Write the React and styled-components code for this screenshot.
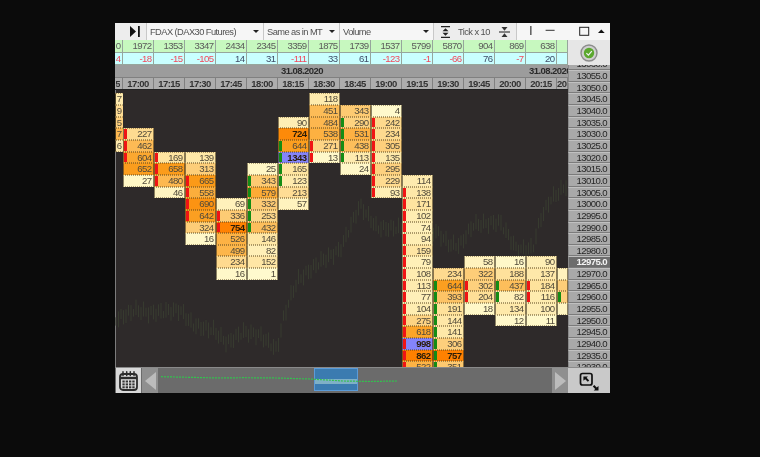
import React from 'react';
import styled, { createGlobalStyle } from 'styled-components';

const GlobalStyle = createGlobalStyle`
  html, body { margin: 0; padding: 0; background: #0b0b0b; }
  body { font-family: "Liberation Sans", Arial, sans-serif; }
`;

const COLS = '8px repeat(14, 31px) 11px';
const ROW_H = 11.67;

const volumes = ['0', 1972, 1353, 3347, 2434, 2345, 3359, 1875, 1739, 1537, 5799, 5870, 904, 869, 638, ''];
const deltas = ['4', -18, -15, -105, 14, 31, -111, 33, 61, -123, -1, -66, 76, -7, 20, ''];
const times = ['16:45', '17:00', '17:15', '17:30', '17:45', '18:00', '18:15', '18:30', '18:45', '19:00', '19:15', '19:30', '19:45', '20:00', '20:15', '20:30'];

// value, marker (r / g), colour override for the cut columns
const columns = [
  { col: 1, top: 13045, rows: [['7', '', 120], ['9', '', 220], ['5', '', 300], ['7', '', 480], ['6', '', 120]] },
  { col: 2, top: 13030, rows: [[227, 'r'], [462, 'r'], [604, 'r'], [652], [27]] },
  { col: 3, top: 13020, rows: [[169, 'r'], [658, 'r'], [480, 'r'], [46]] },
  { col: 4, top: 13020, rows: [[139], [313], [665, 'r'], [558, 'r'], [690, 'r'], [642, 'r'], [324], [16]] },
  { col: 5, top: 13000, rows: [[69], [336, 'r'], [754, 'r'], [526], [499], [234], [16]] },
  { col: 6, top: 13015, rows: [[25], [343, 'g'], [579, 'g'], [332, 'g'], [253, 'g'], [432, 'g'], [146], [82], [152], [1]] },
  { col: 7, top: 13035, rows: [[90], [724], [644, 'g'], [1343, 'g'], [165, 'g'], [123, 'g'], [213], [57]] },
  { col: 8, top: 13045, rows: [[118], [451], [484], [538], [271, 'r'], [13, 'r']] },
  { col: 9, top: 13040, rows: [[343], [290, 'g'], [531, 'g'], [438, 'g'], [113, 'g'], [24]] },
  { col: 10, top: 13040, rows: [[4], [242, 'r'], [234, 'r'], [305, 'r'], [135, 'r'], [295, 'r'], [229, 'r'], [93, 'r']] },
  { col: 11, top: 13010, rows: [[114], [138, 'r'], [171, 'r'], [102, 'r'], [74, 'r'], [94, 'r'], [159, 'r'], [79, 'r'], [108, 'r'], [113, 'r'], [77, 'r'], [104, 'r'], [275, 'r'], [618, 'r'], [998, 'r'], [862, 'r'], [522, 'r']] },
  { col: 12, top: 12970, rows: [[234], [644, 'g'], [393, 'g'], [191, 'g'], [144, 'g'], [141, 'g'], [306, 'g'], [757, 'g'], [351, 'g']] },
  { col: 13, top: 12975, rows: [[58], [322], [302, 'r'], [204, 'r'], [18]] },
  { col: 14, top: 12975, rows: [[16], [188], [437, 'g'], [82, 'g'], [134], [12]] },
  { col: 15, top: 12975, rows: [[90], [137], [184, 'r'], [116, 'r'], [100], [11]] },
  { col: 16, top: 12970, rows: [['', '', 60], ['', '', 320], ['', 'g', 300], ['', '', 40]] },
];

const prices = [];
for (let p = 13060; p >= 12930; p -= 5) prices.push(p);

const ramp = [
  [0, [255, 250, 205]],
  [170, [254, 228, 160]],
  [313, [253, 206, 122]],
  [480, [253, 184, 80]],
  [604, [252, 168, 48]],
  [665, [251, 154, 24]],
  [760, [255, 128, 0]],
];

function heat(value) {
  if (value >= 900) return '#8484fa';
  for (let i = 1; i < ramp.length; i++) {
    if (value <= ramp[i][0]) {
      const [a, ca] = ramp[i - 1];
      const [b, cb] = ramp[i];
      const t = (value - a) / (b - a);
      const c = ca.map((v, n) => Math.round(v + (cb[n] - v) * t));
      return `rgb(${c.join(',')})`;
    }
  }
  return '#ff8000';
}

const Page = styled.div`
  width: 760px; height: 457px; box-sizing: border-box; padding: 23px 0 0 115px; overflow: hidden;
  filter: blur(0.35px);
`;

const Window = styled.div`
  width: 495px; height: 370px; display: flex; flex-direction: column; background: #2e2a2a;
`;

const Toolbar = styled.div`
  height: 17px; display: flex; background: #ededed; color: #505050; font-size: 9.3px; flex: none;
`;

const ToolSegment = styled.div`
  width: ${p => p.$w}px; box-sizing: border-box; display: flex; align-items: center; flex: none;
  padding: 0 ${p => p.$pad || 3}px; gap: ${p => p.$gap || 0}px; justify-content: ${p => p.$justify || 'flex-start'};
  border-left: ${p => (p.$first ? 'none' : '1px solid #c8c8c8')};
  background: ${p => (p.$light ? '#f6f6f6' : 'transparent')};
`;

const ToolLabel = styled.span`
  letter-spacing: -0.56px; white-space: nowrap; margin-right: auto;
`;

const ToolIcon = styled.svg`
  flex: none;
`;

const Caret = styled.span`
  width: 0; height: 0; border-left: 3px solid transparent; border-right: 3px solid transparent;
  border-top: 3px solid #222; margin-right: 1px; flex: none;
`;

const Body = styled.div`
  flex: 1; min-height: 0; display: flex;
`;

const LeftPane = styled.div`
  width: 453px; display: flex; flex-direction: column; flex: none;
`;

const RightPane = styled.div`
  width: 42px; display: flex; flex-direction: column; min-height: 0;
`;

const StatRow = styled.div`
  display: grid; grid-template-columns: ${COLS}; height: 12.5px; flex: none;
  background: ${p => p.$bg};
`;

const StatCell = styled.div`
  box-sizing: border-box; overflow: hidden; text-align: right; padding-right: 1.5px;
  font-size: 9.6px; letter-spacing: -0.6px; line-height: 11.5px;
  border-right: 1px solid #96a69c; border-bottom: 1px solid #96a69c;
  color: ${p => (p.$negative ? '#f2495c' : p.$blue ? '#3f4d68' : '#5a5a5a')};
`;

const DateBar = styled.div`
  display: grid; grid-template-columns: ${COLS}; height: 11.5px; flex: none; background: #9c9c9c; overflow: hidden;
  font-size: 9.5px; letter-spacing: -0.55px; font-weight: bold; color: #2b2b2b; line-height: 11.5px;
`;

const DateLabel = styled.div`
  grid-column: ${p => p.$col}; padding-left: 3px; white-space: nowrap;
`;

const TimeBar = styled.div`
  display: grid; grid-template-columns: ${COLS}; height: 13.5px; flex: none; background: #adadad;
  border-bottom: 1px solid #222; box-sizing: border-box;
`;

const TimeCell = styled.div`
  display: flex; align-items: center; overflow: hidden; white-space: nowrap;
  font-size: 9.5px; letter-spacing: -0.55px; font-weight: bold; color: #333;
  box-sizing: border-box; border-right: 1px solid #808080; border-top: 1px solid #808080;
  padding-right: ${p => (p.$cut ? 2 : 0)}px;
  justify-content: ${p => (p.$left ? 'flex-start' : p.$cut ? 'flex-end' : 'center')};
`;

const CutDigit = styled.span`
  display: inline-block; width: 4px; overflow: hidden; direction: rtl;
`;

const Chart = styled.div`
  position: relative; flex: 1; min-height: 0; overflow: hidden; background: #2e2a2a; box-sizing: border-box; padding-top: 3.3px;
  box-shadow: inset 1px 0 0 #7c7c7c;
`;

const Candles = styled.svg`
  position: absolute; left: 0; top: 0;
`;

const Ladder = styled.div`
  position: relative; display: grid; grid-template-columns: ${COLS}; grid-auto-rows: ${ROW_H}px;
`;

const Cell = styled.div`
  grid-column: ${p => p.$col}; grid-row: ${p => p.$row};
  position: relative; box-sizing: border-box; overflow: hidden;
  background: ${p => p.$bg};
  border-top: 1px dotted rgba(90, 70, 30, 0.5); border-bottom: 1px dotted rgba(90, 70, 30, 0.5);
  border-left: 1px solid rgba(60, 50, 30, ${p => (p.$col === 1 ? 0.9 : 0.6)});
  border-right: 1px solid rgba(60, 50, 30, ${p => (p.$col === 1 ? 0 : 0.6)});
  text-align: right; padding-right: ${p => (p.$col === 1 ? 0.5 : 1.5)}px;
  font-size: 9.6px; letter-spacing: -0.55px; line-height: 10px;
  font-weight: ${p => (p.$strong ? 'bold' : 'normal')};
  color: ${p => (p.$strong ? '#2a1c08' : '#514a3a')};
  &::before {
    content: ''; display: ${p => (p.$mark ? 'block' : 'none')};
    position: absolute; left: 0; top: 0; bottom: 0; width: 3px;
    background: ${p => (p.$mark === 'r' ? '#f01414' : '#148c14')};
  }
`;

const CheckButton = styled.div`
  height: 25px; flex: none; background: #e6e6e6; display: flex; align-items: center; justify-content: center;
  position: relative; z-index: 1;
`;

const PriceColumn = styled.div`
  flex: 1; min-height: 0; overflow: hidden; background: #a6a6a6;
`;

const PriceTrack = styled.div`
  display: grid; grid-auto-rows: ${ROW_H}px; margin-top: -6.7px;
`;

const PriceCell = styled.div`
  box-sizing: border-box; font-size: 9.6px; letter-spacing: -0.6px; font-weight: ${p => (p.$active ? 'bold' : 'normal')};
  line-height: 10px; text-align: right; padding-right: 3px;
  color: ${p => (p.$active ? '#f4f4f4' : '#262626')};
  background: ${p => (p.$active ? '#6d6d6d' : '#a9a9a9')};
  border-top: 1px solid #c0c0c0; border-bottom: 1px solid #7b7b7b; border-left: 1px solid #8a8a8a;
`;

const BottomBar = styled.div`
  height: 26px; flex: none; display: flex; background: #6b6b6b; border-top: 1px solid #8a8a8a; box-sizing: border-box;
`;

const CalendarButton = styled.div`
  width: 25px; background: #d9d9d9; display: flex; align-items: center; justify-content: center; margin-left: 1px; flex: none;
`;

const ArrowButton = styled.div`
  width: 16px; flex: none; background: #8f8f8f; display: flex; align-items: center; justify-content: center;
  margin: ${p => (p.$right ? '0' : '0 0 0 1px')};
  &::after {
    content: ''; width: 0; height: 0;
    border-top: 9px solid transparent; border-bottom: 9px solid transparent;
    ${p => (p.$right ? 'border-left: 11px solid #bcbcbc;' : 'border-right: 11px solid #bcbcbc;')}
  }
`;

const Minimap = styled.div`
  position: relative; flex: 1; min-width: 0;
`;

const MiniLine = styled.svg`
  position: absolute; left: 0; top: 0;
`;

const Selection = styled.div`
  position: absolute; left: 156px; top: 0; width: 44px; height: 23px; box-sizing: border-box;
  background: linear-gradient(#3b7bb0 0 48%, #7fb0c6 48% 70%, #3b7bb0 70%);
  border: 1px solid #5b9bd8;
`;

const ZoomButton = styled.div`
  width: 42px; flex: none; background: #c9c9c9; display: flex; align-items: center; justify-content: center;
`;

function StepIcon() {
  return (
    <ToolIcon width="11" height="12" viewBox="0 0 11 12">
      <path d="M1 .7h9M1 11.3h9" stroke="#222" strokeWidth="1.2" />
      <path d="M5.5 2.2l3 3H2.5zM5.5 9.8l-3-3h6z" fill="#222" />
    </ToolIcon>
  );
}

function CollapseIcon() {
  return (
    <ToolIcon width="11" height="12" viewBox="0 0 11 12">
      <path d="M0 6h11" stroke="#555" strokeWidth="1.4" />
      <path d="M5.5 4.8L2.5 1h6zM5.5 7.2L2.5 11h6z" fill="#333" />
    </ToolIcon>
  );
}

function CalendarIcon() {
  return (
    <svg width="19" height="20" viewBox="0 0 19 20">
      <rect x="1" y="3" width="17" height="16" rx="3" fill="#dcdcdc" stroke="#2c2c2c" strokeWidth="1.8" />
      <path d="M1 7h17" stroke="#2c2c2c" strokeWidth="2.4" />
      <path d="M4 .8v3.6M7.7 .8v3.6M11.3 .8v3.6M15 .8v3.6" stroke="#2c2c2c" strokeWidth="1.5" strokeLinecap="round" />
      {[9.5, 12.4, 15.3].map(y =>
        [3.4, 6.7, 10, 13.3].map(x => <rect key={`${x}-${y}`} x={x} y={y} width="2.3" height="2" fill="#333" />)
      )}
    </svg>
  );
}

function ExpandIcon() {
  return (
    <svg width="20" height="20" viewBox="0 0 20 20">
      <rect x="1.5" y="2.5" width="11.5" height="11.5" rx="2" fill="none" stroke="#111" strokeWidth="1.7" />
      <path d="M4.4 5.4h4.6L7.6 6.8l2.6 2.6-1.4 1.4-2.6-2.6-1.8 1.6z" fill="#111" />
      <path d="M19.5 19.5h-4.8l1.5-1.5-2.4-2.4 1.5-1.5 2.4 2.4 1.8-1.6z" fill="#111" />
    </svg>
  );
}

function CheckIcon() {
  return (
    <svg width="18" height="18" viewBox="0 0 18 18">
      <circle cx="9" cy="9" r="8" fill="#cfcfcf" stroke="#8c8c8c" strokeWidth="1.4" />
      <circle cx="9" cy="9" r="5.2" fill="#5aa82e" />
      <path d="M6.4 9.2l2 2 3.4-4" fill="none" stroke="#f2f2f2" strokeWidth="1.2" />
    </svg>
  );
}

// faint price candles behind the ladder, page coordinates minus the chart origin
const track = [
  [115, 320], [135, 310], [150, 313], [180, 310], [193, 325], [213, 330], [227, 343], [243, 332], [260, 335],
  [277, 350], [283, 320], [290, 298], [298, 280], [320, 262], [340, 250], [360, 205], [377, 228], [397, 228],
  [437, 232], [450, 245], [460, 245], [473, 225], [500, 222], [517, 250], [533, 248], [540, 220], [550, 200], [567, 185],
];

function priceAt(x) {
  for (let i = 1; i < track.length; i++) {
    if (x <= track[i][0]) {
      const [x0, y0] = track[i - 1];
      const [x1, y1] = track[i];
      return y0 + ((y1 - y0) * (x - x0)) / (x1 - x0);
    }
  }
  return track[track.length - 1][1];
}

function CandleLayer() {
  const bars = [];
  for (let x = 116; x < 568; x += 2.5) {
    const mid = priceAt(x) + Math.sin(x * 1.7) * 3;
    const len = 7 + Math.abs(Math.sin(x * 0.73)) * 9;
    bars.push(`M${x - 115} ${mid - 90 - len / 2}v${len}`);
  }
  return (
    <Candles width="453" height="277" viewBox="0 0 453 277">
      <path d={bars.join('')} stroke="#373b2f" strokeWidth="1" fill="none" />
    </Candles>
  );
}

export default function App() {
  return (
    <>
      <GlobalStyle />
      <Page>
        <Window>
          <Toolbar>
            <ToolSegment $w={31} $first $justify="flex-end" $pad={6}>
              <ToolIcon width="10" height="11" viewBox="0 0 10 11">
                <path d="M0 0l6 5.5L0 11z" fill="#111" />
                <rect x="8" y="0" width="1.8" height="11" fill="#111" />
              </ToolIcon>
            </ToolSegment>
            <ToolSegment $w={117} $light>
              <ToolLabel>FDAX (DAX30 Futures)</ToolLabel>
              <Caret />
            </ToolSegment>
            <ToolSegment $w={76} $light>
              <ToolLabel>Same as in MT</ToolLabel>
              <Caret />
            </ToolSegment>
            <ToolSegment $w={94} $light>
              <ToolLabel>Volume</ToolLabel>
              <Caret />
            </ToolSegment>
            <ToolSegment $w={83} $pad={6} $gap={7}>
              <StepIcon />
              <ToolLabel>Tick x 10</ToolLabel>
              <CollapseIcon />
            </ToolSegment>
            <ToolSegment $w={94} $light $pad={0}>
              <ToolIcon width="94" height="17" viewBox="0 0 94 17">
                <rect x="10" y="3" width="1.6" height="9" fill="#666" />
                <rect x="25.6" y="6.8" width="9" height="1" fill="#333" />
                <rect x="59.7" y="4.3" width="9" height="8" fill="none" stroke="#222" strokeWidth="1" />
                <path d="M78 10l3.3-3.4 3.4 3.4z" fill="#111" />
              </ToolIcon>
            </ToolSegment>
          </Toolbar>
          <Body>
            <LeftPane>
              <StatRow $bg="#c7f8bf">
                {volumes.map((v, i) => (
                  <StatCell key={i}>{v}</StatCell>
                ))}
              </StatRow>
              <StatRow $bg="#c9ffff">
                {deltas.map((v, i) => (
                  <StatCell key={i} $negative={v < 0 || v === '4'} $blue={v > 0}>{v}</StatCell>
                ))}
              </StatRow>
              <DateBar>
                <DateLabel $col={7}>31.08.2020</DateLabel>
                <DateLabel $col={15}>31.08.2020</DateLabel>
              </DateBar>
              <TimeBar>
                {times.map((t, i) => (
                  <TimeCell key={t} $cut={i === 0} $left={i === 15}>
                    {i === 0 ? <CutDigit>{t}</CutDigit> : t}
                  </TimeCell>
                ))}
              </TimeBar>
              <Chart>
                <CandleLayer />
                <Ladder>
                  {columns.map(c =>
                    c.rows.map(([value, mark, tone], i) => {
                      const amount = tone ?? Number(value);
                      return (
                        <Cell
                          key={`${c.col}-${i}`}
                          $col={c.col}
                          $row={(13045 - c.top) / 5 + i + 1}
                          $mark={mark}
                          $bg={heat(amount)}
                          $strong={amount > 700}
                        >
                          {value}
                        </Cell>
                      );
                    })
                  )}
                </Ladder>
              </Chart>
            </LeftPane>
            <RightPane>
              <CheckButton><CheckIcon /></CheckButton>
              <PriceColumn>
                <PriceTrack>
                  {prices.map(p => (
                    <PriceCell key={p} $active={p === 12975}>{p.toFixed(1)}</PriceCell>
                  ))}
                </PriceTrack>
              </PriceColumn>
            </RightPane>
          </Body>
          <BottomBar>
            <CalendarButton><CalendarIcon /></CalendarButton>
            <ArrowButton />
            <Minimap>
              <Selection />
              <MiniLine width="393" height="25" viewBox="0 0 393 25">
                <path
                  d="M3 8.7L62 10 85 9.7 119 10 152 11 185 13 212 13.5 239 13"
                  fill="none" stroke="#33c24e" strokeWidth="1.2" strokeDasharray="2 1"
                />
              </MiniLine>
            </Minimap>
            <ArrowButton $right />
            <ZoomButton><ExpandIcon /></ZoomButton>
          </BottomBar>
        </Window>
      </Page>
    </>
  );
}
